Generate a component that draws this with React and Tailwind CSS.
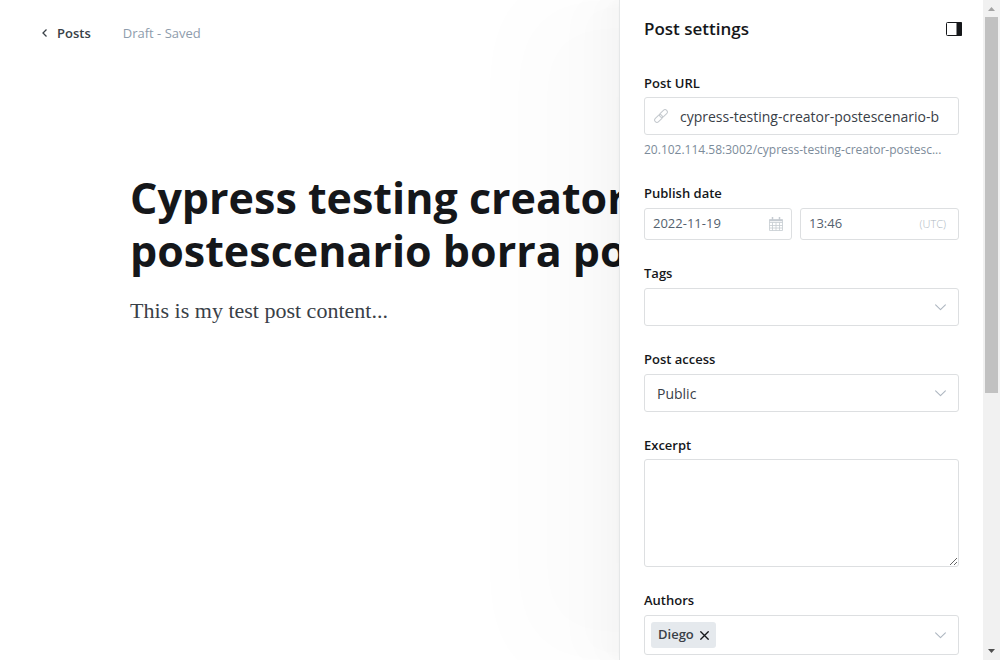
import React from "react";

const label = "block text-[13px] leading-5 font-semibold text-[#15171a]";
const box = "rounded-[3px] border border-[#dddfe1] bg-white";

function Chevron() {
  return (
    <svg className="pointer-events-none h-[7px] w-[11px] shrink-0" viewBox="0 0 11 7" fill="none" stroke="#aeb7c1" strokeWidth="1.1" aria-hidden="true">
      <path d="M.6 .8 5.5 5.7 10.4 .8" strokeLinecap="round" strokeLinejoin="round" />
    </svg>
  );
}

function LinkIcon() {
  return (
    <svg className="h-[14px] w-[14px] shrink-0" viewBox="0 0 14 14" fill="none" stroke="#c3c8cd" strokeWidth="1" strokeLinecap="round" strokeLinejoin="round" aria-hidden="true">
      <g transform="rotate(-45 7 7)">
        <rect x="-1" y="4.700" width="9" height="4.600" rx="2.300" />
        <rect x="6" y="4.700" width="9" height="4.600" rx="2.300" />
      </g>
    </svg>
  );
}

function CalendarIcon() {
  return (
    <svg className="h-[14px] w-[14px] shrink-0" viewBox="0 0 14 14" fill="none" stroke="#c5cbd1" aria-hidden="true">
      <path d="M.5 2.500h13v11H.5zM.5 5.500h13M3.500 5.500v8M7 5.500v8M10.500 5.500v8M.5 8.500h13M.5 11h13" strokeWidth=".8" />
      <path d="M.5 3.500h13" strokeWidth="1.500" />
      <path d="M3.500 0v3M10.500 0v3" strokeWidth="1.500" />
    </svg>
  );
}

function Scrollbar() {
  return (
    <div className="flex w-[17px] shrink-0 flex-col items-center bg-[#f1f1f1]" aria-hidden="true">
      <svg className="h-[17px] w-[17px] shrink-0" viewBox="0 0 17 17"><path d="M5 11h7L8.500 7z" fill="#a3a3a3" /></svg>
      <div className="min-h-0 w-[13px] flex-1"><div className="h-3/5 bg-[#c1c1c1]" /></div>
      <svg className="h-[17px] w-[17px] shrink-0" viewBox="0 0 17 17"><path d="M5 6h7L8.500 10z" fill="#505050" /></svg>
    </div>
  );
}

function Settings() {
  return (
    <aside className="absolute inset-y-0 right-0 flex w-[381px] border-l border-[#e5e7e8] bg-white shadow-[-3px_0_2px_rgba(0,0,0,0.005),-7px_0_5px_rgba(0,0,0,0.006),-12px_0_10px_rgba(0,0,0,0.008),-22px_0_18px_rgba(0,0,0,0.01),-42px_0_33px_rgba(0,0,0,0.012),-100px_0_80px_rgba(0,0,0,0.017)]">
      <div className="flex min-w-0 flex-1 flex-col overflow-hidden">
        <header className="flex h-[58px] shrink-0 items-center justify-between pr-[21px] pl-6">
          <h2 className="text-[17px] leading-6 font-semibold text-[#15171a]">Post settings</h2>
          <button type="button" aria-label="Close settings">
            <svg className="block h-[14px] w-[16px]" viewBox="0 0 16 14"><rect x=".5" y=".5" width="15" height="13" rx="1" fill="none" stroke="#15171a" /><path d="M10.500 0H15a1 1 0 0 1 1 1v12a1 1 0 0 1-1 1h-4.500z" fill="#15171a" /></svg>
          </button>
        </header>
        <form className="flex flex-col gap-[23px] px-6 pt-[15px]">
          <div>
            <label htmlFor="url" className={label}>Post URL</label>
            <div className={`mt-1 flex h-[38px] items-center gap-3 pr-3 pl-[9px] ${box}`}>
              <LinkIcon />
              <input id="url" defaultValue="cypress-testing-creator-postescenario-b" className="min-w-0 flex-1 text-[14px] text-[#394047] outline-none" />
            </div>
            <p className="mt-[5px] truncate text-[12px] leading-5 text-[#7c8b9a]">20.102.114.58:3002/cypress-testing-creator-postesc...</p>
          </div>
          <div>
            <label htmlFor="date" className={label}>Publish date</label>
            <div className="mt-[5px] flex gap-2">
              <div className={`flex h-8 w-[148px] items-center px-2 ${box}`}>
                <input id="date" defaultValue="2022-11-19" className="min-w-0 flex-1 text-[13px] text-[#54616e] outline-none" />
                <CalendarIcon />
              </div>
              <div className={`flex h-8 min-w-0 flex-1 items-center pr-3 pl-2 ${box}`}>
                <input aria-label="Publish time" defaultValue="13:46" className="min-w-0 flex-1 text-[13px] text-[#54616e] outline-none" />
                <span className="text-[11px] font-light text-[#aeb7c1]">(UTC)</span>
              </div>
            </div>
          </div>
          <div>
            <label htmlFor="tags" className={label}>Tags</label>
            <div className={`mt-[5px] flex h-[38px] items-center px-3 ${box}`}>
              <input id="tags" className="min-w-0 flex-1 text-[14px] outline-none" />
              <Chevron />
            </div>
          </div>
          <div>
            <label htmlFor="access" className={label}>Post access</label>
            <div className={`mt-[5px] flex h-[38px] items-center px-3 ${box}`}>
              <select id="access" className="min-w-0 flex-1 appearance-none text-[14px] text-[#394047] outline-none">
                <option>Public</option>
              </select>
              <Chevron />
            </div>
          </div>
          <div>
            <label htmlFor="excerpt" className={label}>Excerpt</label>
            <textarea id="excerpt" className={`mt-1 block h-[108px] w-full resize-y px-3 py-2 text-[14px] outline-none ${box}`} />
          </div>
          <div>
            <label htmlFor="authors" className={label}>Authors</label>
            <div className={`mt-[5px] flex h-10 items-center pr-3 pl-[6px] ${box}`}>
              <button type="button" className="flex h-[26px] items-center gap-[6px] rounded-[3px] bg-[#e5e9ed] px-[7px] text-[13px] font-semibold text-[#394047]">
                Diego
                <svg className="h-[9px] w-[9px]" viewBox="0 0 8 8" stroke="#15171a" strokeWidth="1.200"><path d="M.3 .3 7.700 7.700M7.700 .3 .3 7.700" /></svg>
              </button>
              <input id="authors" className="min-w-0 flex-1 outline-none" />
              <Chevron />
            </div>
          </div>
        </form>
      </div>
      <Scrollbar />
    </aside>
  );
}

export default function App() {
  return (
    <div className="relative h-screen overflow-hidden bg-white font-['Open_Sans','Noto_Sans',sans-serif]">
      <nav className="flex h-[66px] items-center gap-8 px-[42px] text-[13px] leading-5">
        <a href="#posts" className="flex items-center gap-[10px] font-semibold text-[#394047]">
          <svg className="h-[8px] w-[5px]" viewBox="0 0 5 8" fill="none" stroke="#394047" strokeWidth="1.300"><path d="M4.500 .5 1 4l3.500 3.500" /></svg>
          Posts
        </a>
        <span className="text-[#8e9cac]">Draft - Saved</span>
      </nav>
      <main className="mx-auto mt-[105px] w-full max-w-[740px]">
        <textarea
          aria-label="Post title"
          rows={2}
          defaultValue="Cypress testing creator postescenario borra post"
          className="block w-full resize-none overflow-hidden text-[43px] leading-[53px] font-bold text-[#15171a] outline-none"
        />
        <p className="mt-[18px] font-['Liberation_Serif',serif] text-[22px] leading-8 text-[#394047]">This is my test post content...</p>
      </main>
      <Settings />
    </div>
  );
}
